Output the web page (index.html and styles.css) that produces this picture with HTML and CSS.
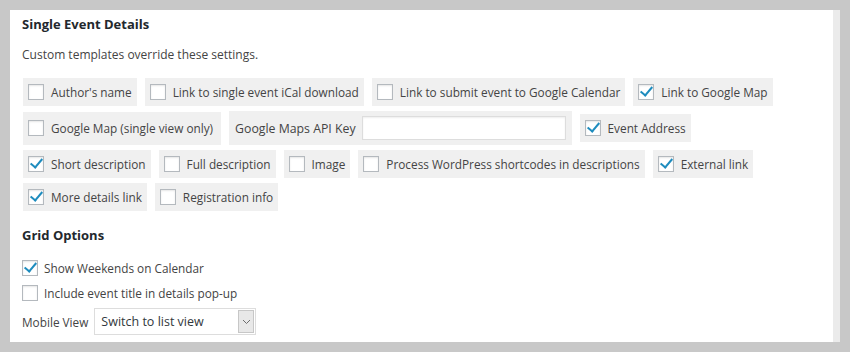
FILE: index.html
```html
<!DOCTYPE html>
<html lang="en">
<head>
  <meta charset="UTF-8" />
  <title>Event Settings</title>
  <link rel="stylesheet" href="styles.css">
</head>
<body>
  <div class="panel">
    <h3 class="section-title">Single Event Details</h3>
    <p class="section-note">Custom templates override these settings.</p>

    <div class="option-grid">
      <label class="option"><span class="check"></span>Author's name</label>
      <label class="option"><span class="check"></span>Link to single event iCal download</label>
      <label class="option"><span class="check"></span>Link to submit event to Google Calendar</label>
      <label class="option"><span class="check is-checked"></span>Link to Google Map</label>

      <label class="option option-tall"><span class="check"></span>Google Map (single view only)</label>
      <label class="option option-field">Google Maps API Key <span class="text-input"></span></label>
      <label class="option"><span class="check is-checked"></span>Event Address</label>

      <label class="option"><span class="check is-checked"></span>Short description</label>
      <label class="option"><span class="check"></span>Full description</label>
      <label class="option"><span class="check"></span>Image</label>
      <label class="option"><span class="check"></span>Process WordPress shortcodes in descriptions</label>
      <label class="option"><span class="check is-checked"></span>External link</label>

      <label class="option"><span class="check is-checked"></span>More details link</label>
      <label class="option"><span class="check"></span>Registration info</label>
    </div>

    <h3 class="section-title grid-title">Grid Options</h3>
    <label class="plain-option"><span class="check is-checked"></span>Show Weekends on Calendar</label>
    <label class="plain-option"><span class="check"></span>Include event title in details pop-up</label>

    <div class="select-row">
      <span>Mobile View</span>
      <div class="select">
        <span class="select-value">Switch to list view</span>
        <span class="select-arrow">
          <svg width="9" height="6" viewBox="0 0 9 6"><path d="M1 1 L4.5 4.5 L8 1" fill="none" stroke="#6d6d6d" stroke-width="1"/></svg>
        </span>
      </div>
    </div>
  </div>
</body>
</html>
```

FILE: styles.css
```css
* {
  margin: 0;
  padding: 0;
  box-sizing: border-box;
}

body {
  background: #c8c8c8;
  padding: 10px;
  font-family: 'Open Sans', 'Noto Sans', sans-serif;
  font-size: 11.8px;
  color: #444;
}

.panel {
  width: 830px;
  height: 332px;
  background: #fff;
  border-right: 7px solid #ebebeb;
  padding: 4px 12px 0;
}

.section-title {
  font-size: 13px;
  font-weight: 700;
  color: #23282d;
  line-height: 20px;
}

.section-note {
  margin-top: 11px;
  line-height: 20px;
  font-size: 12px;
  color: #444;
}

.option-grid {
  display: flex;
  flex-wrap: wrap;
  align-items: center;
  gap: 5px 8px;
  margin-top: 13px;
  padding-left: 1px;
  width: 790px;
}

.option {
  display: flex;
  align-items: center;
  height: 28px;
  padding: 0 5px;
  background: #f0f0f0;
  white-space: nowrap;
}

.option .check {
  margin-right: 7px;
}

.option-tall {
  height: 33px;
  padding-right: 8px;
}

.option-field {
  height: 34px;
  padding: 0 6px;
  font-size: 12.3px;
}

.text-input {
  display: block;
  width: 204px;
  height: 24px;
  margin-left: 6px;
  background: #fff;
  border: 1px solid #ddd;
  box-shadow: inset 0 1px 2px rgba(0, 0, 0, 0.07);
}

.check {
  position: relative;
  display: inline-block;
  flex: none;
  width: 16px;
  height: 16px;
  background: #fff;
  border: 1px solid #b4b9be;
  box-shadow: inset 0 1px 2px rgba(0, 0, 0, 0.1);
}

.check.is-checked::after {
  content: "";
  position: absolute;
  left: 4px;
  top: -1px;
  width: 5px;
  height: 10px;
  border: solid #1e8cbe;
  border-width: 0 2.5px 2.5px 0;
  transform: rotate(40deg);
}

.grid-title {
  margin-top: 14px;
}

.plain-option {
  display: flex;
  align-items: center;
  height: 16px;
  margin-top: 15px;
  white-space: nowrap;
}

.plain-option + .plain-option {
  margin-top: 9px;
}

.plain-option .check {
  margin-right: 6px;
}

.select-row {
  display: flex;
  align-items: center;
  gap: 6px;
  margin-top: 7px;
}

.select {
  display: flex;
  align-items: center;
  justify-content: space-between;
  width: 162px;
  height: 27px;
  border: 1px solid #ddd;
  background: #fff;
  padding: 1px 1px 1px 6px;
  font-size: 12.5px;
  color: #32373c;
}

.select-arrow {
  display: flex;
  align-items: center;
  justify-content: center;
  width: 16px;
  height: 23px;
  background: #e8e8e8;
  border: 1px solid #c7c7c7;
}
```
